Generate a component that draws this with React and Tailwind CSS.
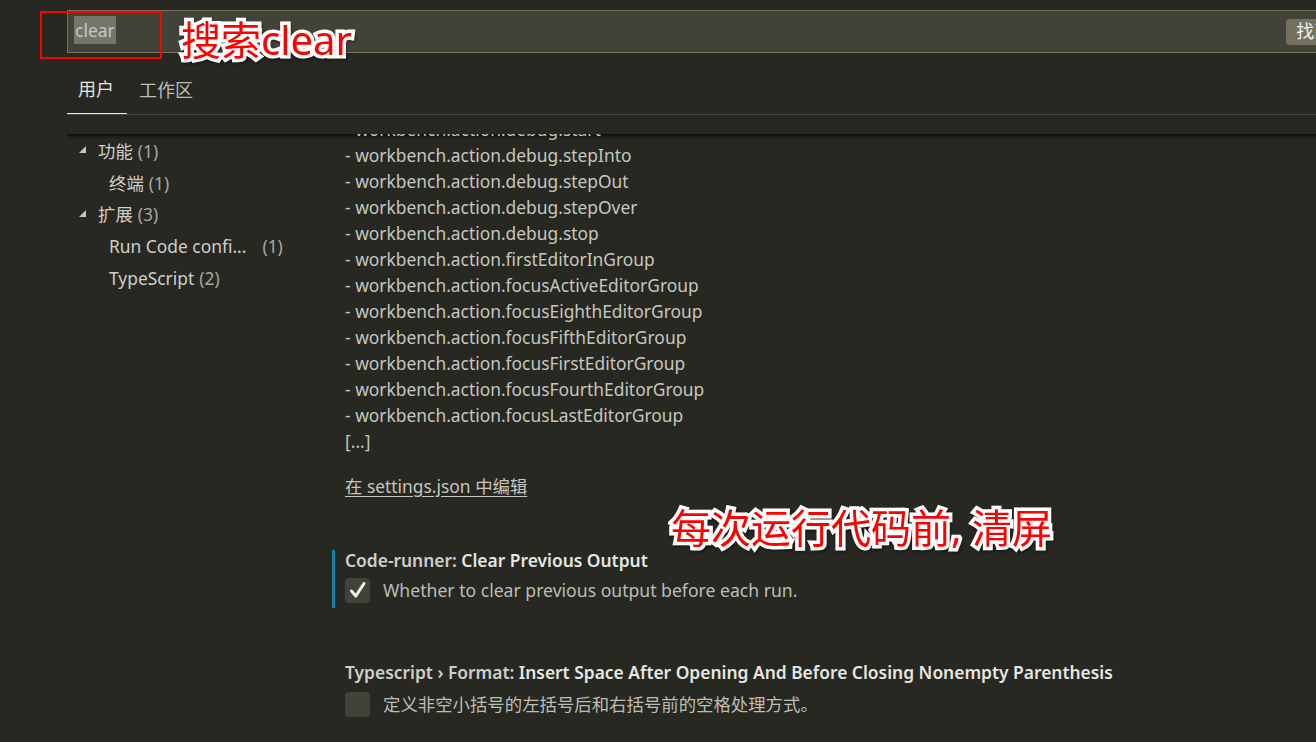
import React from "react";

const font = "font-['Noto_Sans','Noto_Sans_CJK_SC',sans-serif]";

const commands = [
  "workbench.action.debug.start",
  "workbench.action.debug.stepInto",
  "workbench.action.debug.stepOut",
  "workbench.action.debug.stepOver",
  "workbench.action.debug.stop",
  "workbench.action.firstEditorInGroup",
  "workbench.action.focusActiveEditorGroup",
  "workbench.action.focusEighthEditorGroup",
  "workbench.action.focusFifthEditorGroup",
  "workbench.action.focusFirstEditorGroup",
  "workbench.action.focusFourthEditorGroup",
  "workbench.action.focusLastEditorGroup",
];

const TreeRow = ({ label, count, indent, open, spaced }) => (
  <div className={`flex h-[31.75px] items-center ${indent ? "pl-[42px]" : "pl-[11px]"}`}>
    {open && (
      <svg width="9" height="9" viewBox="0 0 9 9" className="mr-[11px] mb-[2px]">
        <path d="M8 1 L8 8 L1 8 Z" fill="#c5c5c5" />
      </svg>
    )}
    <span className="text-[#cfcfc8]">{label}</span>
    <span className={`text-[#a8a8a0] ${spaced ? "ml-[16px]" : "ml-[5px]"}`}>{count}</span>
  </div>
);

const Checkbox = ({ checked }) => (
  <div className="flex h-[25px] w-[25px] shrink-0 items-center justify-center rounded-[4px] bg-[#414339]">
    {checked && (
      <svg width="18" height="18" viewBox="0 0 18 18">
        <path d="M2.5 10 L6.8 15 L15 2.5" fill="none" stroke="#f0f0f0" strokeWidth="3" strokeLinecap="round" strokeLinejoin="round" />
      </svg>
    )}
  </div>
);

const annotation =
  "absolute text-[#ff0000] [-webkit-text-stroke:7px_white] [paint-order:stroke_fill] [filter:drop-shadow(1px_2px_1px_rgba(0,0,0,0.35))] whitespace-nowrap leading-none";

export default function App() {
  return (
    <div className={`relative h-[742px] w-full overflow-hidden bg-[#272822] ${font}`}>
      {/* search */}
      <div className="pl-[67px] pt-[10px]">
        <div className="flex h-[43px] w-[1290px] items-center border border-[#77735f] bg-[#414339] pl-[6px]">
          <span className="mb-[4px] bg-[#75766b] px-[1px] text-[17.5px] leading-[28px] text-[#c7c7c0]">clear</span>
          <div className="ml-auto mr-[-60px] flex h-[26px] items-center rounded-[4px] bg-[#75715e] pl-[10px] pr-[10px] text-[18px] text-[#f0f0f0]">
            找到 3 个设置
          </div>
        </div>
      </div>

      {/* tabs */}
      <div className="ml-[67px] mt-[23px] flex border-b border-[#45463f] text-[18px]">
        <div className="-mb-px flex h-[38px] items-center border-b border-[#e8e8e8] pb-[10px] pl-[11px] pr-[13px] text-[#e2e2dc]">
          用户
        </div>
        <div className="ml-[12px] flex h-[38px] items-center pb-[10px] text-[#bcbcb5]">工作区</div>
      </div>

      {/* body */}
      <div className="ml-[67px] mt-[19px] flex h-[610px] text-[17.4px] shadow-[inset_0_6px_5px_-5px_#000]">
        <div className="w-[265px] shrink-0 pt-[1px]">
          <TreeRow label="功能" count="(1)" open />
          <TreeRow label="终端" count="(1)" indent />
          <TreeRow label="扩展" count="(3)" open />
          <TreeRow label="Run Code confi..." count="(1)" indent spaced />
          <TreeRow label="TypeScript" count="(2)" indent />
        </div>

        <div className="relative flex-1 overflow-hidden">
          <div className="-mt-[18px] pl-[13px]">
            {commands.map((c) => (
              <div key={c} className="h-[26px] leading-[26px] text-[#c6c6bf]">
                - {c}
              </div>
            ))}
            <div className="h-[26px] leading-[26px] text-[#c6c6bf]">[...]</div>
            <div className="mt-[19px] h-[26px] leading-[26px] text-[#c6c6bf]">
              <span className="underline underline-offset-[3px]">在 settings.json 中编辑</span>
            </div>
          </div>

          <div className="mt-[51px] border-l-[3px] border-[#1083a6] pb-[5px] pl-[10px] pt-0">
            <div className="flex h-[20px] items-center whitespace-nowrap font-semibold">
              <span className="text-[#cfcfc8]">Code-runner:&nbsp;</span>
              <span className="text-[#e6e6e0]">Clear Previous Output</span>
            </div>
            <div className="mt-[7px] flex items-center">
              <Checkbox checked />
              <span className="ml-[13px] text-[17.6px] text-[#bdbdb6]">Whether to clear previous output before each run.</span>
            </div>
          </div>

          <div className="mt-[54px] pl-[13px]">
            <div className="flex h-[20px] items-center whitespace-nowrap font-semibold">
              <span className="text-[#cfcfc8]">Typescript › Format:&nbsp;</span>
              <span className="text-[#e6e6e0]">Insert Space After Opening And Before Closing Nonempty Parenthesis</span>
            </div>
            <div className="mt-[9px] flex items-center">
              <Checkbox />
              <span className="ml-[13px] text-[#bdbdb6]">定义非空小括号的左括号后和右括号前的空格处理方式。</span>
            </div>
          </div>
        </div>
      </div>

      {/* annotations */}
      <div className="absolute left-[40px] top-[11px] h-[48px] w-[122px] border-2 border-[#ff0000]" />
      <div className={`${annotation} left-[181px] top-[20px] text-[40px]`}>搜索clear</div>
      <div className={`${annotation} left-[671px] top-[508px] text-[40px]`}>每次运行代码前, 清屏</div>
    </div>
  );
}
